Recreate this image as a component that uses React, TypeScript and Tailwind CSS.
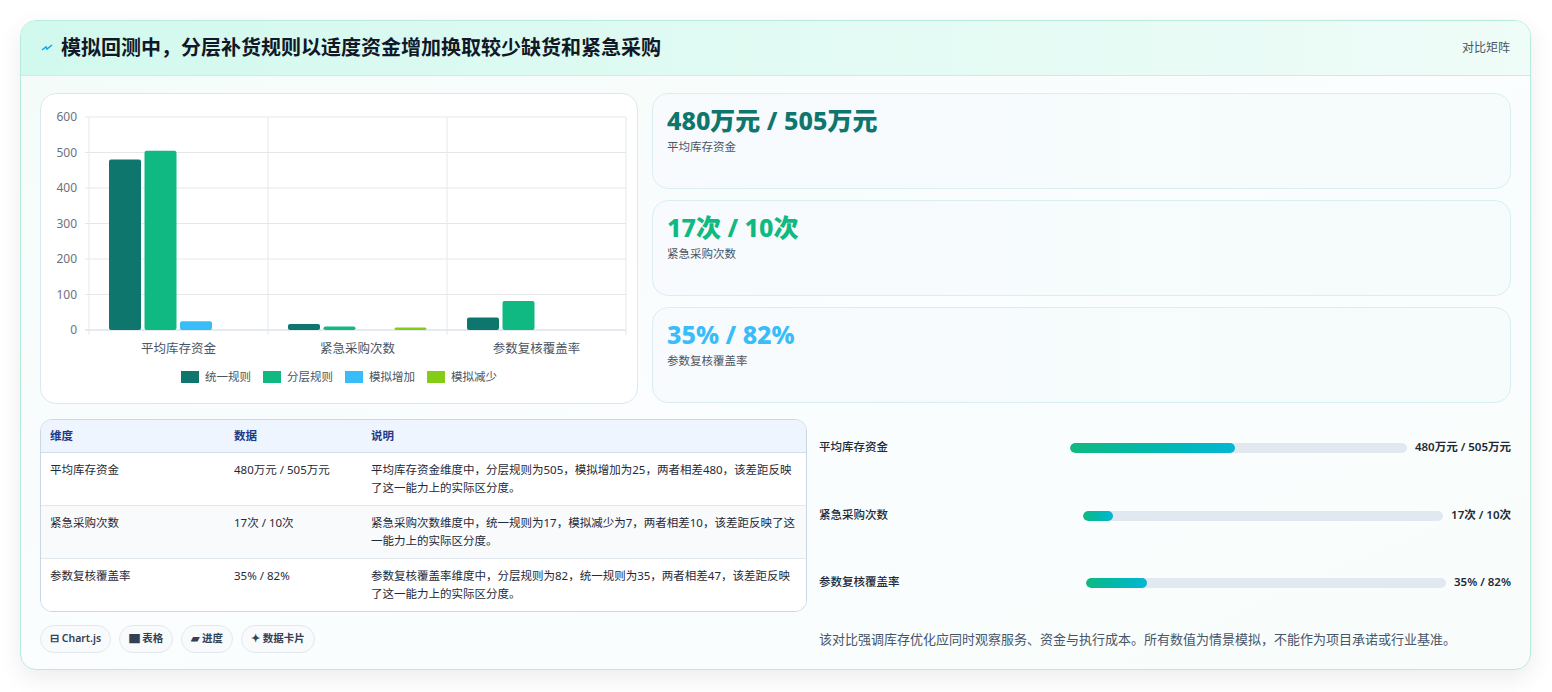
import React from "react";

const F = { fontFamily: '"Noto Sans","Noto Sans CJK SC",sans-serif' };

function Chart() {
  const x0 = 48, y0 = 236, top = 23, h = y0 - top;
  const cw = 179;
  const yv = (v: number) => y0 - (v / 600) * h;
  const data = [
    [480, 505, 25, 0],
    [17, 10, 0, 7],
    [35, 82, 0, 0],
  ];
  const colors = ["#0f766e", "#10b981", "#38bdf8", "#84cc16"];
  const cats = ["平均库存资金", "紧急采购次数", "参数复核覆盖率"];
  return (
    <svg width="597" height="310" className="block" style={F}>
      {[0, 100, 200, 300, 400, 500, 600].map((t) => (
        <g key={t}>
          <line x1={x0 - 4} x2={585} y1={yv(t)} y2={yv(t)} stroke={t === 0 ? "#cbd5e1" : "#e5e7eb"} />
          <text x={36} y={yv(t) + 4} textAnchor="end" fontSize="12" fill="#6b7280">{t}</text>
        </g>
      ))}
      {[0, 1, 2, 3].map((i) => (
        <line key={i} x1={x0 + i * cw} x2={x0 + i * cw} y1={top} y2={y0 + 5} stroke="#e5e7eb" />
      ))}
      {data.map((g, ci) =>
        g.map((v, bi) =>
          v > 0 ? (
            <rect key={ci + "-" + bi} x={x0 + ci * cw + 20 + bi * 35.5} y={yv(v)} width={32} height={y0 - yv(v)} rx={2} fill={colors[bi]} />
          ) : null
        )
      )}
      {cats.map((c, i) => (
        <text key={c} x={x0 + i * cw + cw / 2} y={259} textAnchor="middle" fontSize="12.5" fill="#4b5563">{c}</text>
      ))}
      {["统一规则", "分层规则", "模拟增加", "模拟减少"].map((l, i) => {
        const xs = [140, 222, 304, 386][i];
        return (
          <g key={l}>
            <rect x={xs} y={277} width={18} height={12} fill={colors[i]} />
            <text x={xs + 24} y={287} fontSize="11.5" fill="#4b5563">{l}</text>
          </g>
        );
      })}
    </svg>
  );
}

function Kpi({ v, l, c }: { v: string; l: string; c: string }) {
  return (
    <div className="h-[96px] rounded-2xl border border-[#d9eef0] bg-gradient-to-r from-[#f8fafe] to-[#f5fcfb] px-[14px] pt-[10px]">
      <div className={`text-[25px] font-extrabold leading-[33px] ${c}`}>{v}</div>
      <div className="text-[11.5px] text-[#4b5563] mt-[1px]">{l}</div>
    </div>
  );
}

const rows = [
  ["平均库存资金", "480万元 / 505万元", "平均库存资金维度中，分层规则为505，模拟增加为25，两者相差480，该差距反映了这一能力上的实际区分度。"],
  ["紧急采购次数", "17次 / 10次", "紧急采购次数维度中，统一规则为17，模拟减少为7，两者相差10，该差距反映了这一能力上的实际区分度。"],
  ["参数复核覆盖率", "35% / 82%", "参数复核覆盖率维度中，分层规则为82，统一规则为35，两者相差47，该差距反映了这一能力上的实际区分度。"],
];

const bars = [
  { l: "平均库存资金", v: "480万元 / 505万元", p: 49 },
  { l: "紧急采购次数", v: "17次 / 10次", p: 8.3 },
  { l: "参数复核覆盖率", v: "35% / 82%", p: 17 },
];

export default function App() {
  return (
    <div className="bg-white w-[1552px] h-[692px] pt-[20px] pl-[20px]" style={F}>
      <div className="w-[1511px] h-[650px] rounded-2xl border border-[#b7ebdf] bg-gradient-to-br from-[#f3fcf9] via-[#fbfdfe] to-[#f8fdfc] shadow-[0_8px_24px_rgba(0,0,0,0.08)] overflow-hidden">
        <div className="h-[55px] flex items-center justify-between px-[20px] border-b border-[#c9efe3] bg-gradient-to-r from-[#d2f9ee] to-[#effcf8]">
          <div className="flex items-center gap-[8px]">
            <svg width="12" height="10" viewBox="0 0 12 10"><path d="M1 7 L5 4 L6 6 L11 2" stroke="#0ea5e9" strokeWidth="1.5" fill="none" /></svg>
            <span className="text-[20px] font-bold text-[#111827]">模拟回测中，分层补货规则以适度资金增加换取较少缺货和紧急采购</span>
          </div>
          <span className="text-[12px] text-[#475569]">对比矩阵</span>
        </div>
        <div className="px-[19px] pt-[17px]">
          <div className="flex gap-[14px]">
            <div className="w-[598px] h-[311px] rounded-2xl border border-[#dde7ee] bg-white overflow-hidden">
              <Chart />
            </div>
            <div className="flex-1 flex flex-col gap-[11px]">
              <Kpi v="480万元 / 505万元" l="平均库存资金" c="text-[#0f766e]" />
              <Kpi v="17次 / 10次" l="紧急采购次数" c="text-[#10b981]" />
              <Kpi v="35% / 82%" l="参数复核覆盖率" c="text-[#38bdf8]" />
            </div>
          </div>
          <div className="flex gap-[12px] mt-[15px]">
            <div className="w-[767px]">
              <div className="rounded-xl border border-[#cdd7e3] overflow-hidden bg-white text-[11.5px] text-[#1f2937]">
                <div className="flex h-[33px] items-center bg-[#eef5fe] border-b border-[#d5dde8] font-semibold text-[#1e3a8a]">
                  <div className="w-[193px] pl-[9px]">维度</div>
                  <div className="w-[137px]">数据</div>
                  <div className="flex-1">说明</div>
                </div>
                {rows.map((r, i) => (
                  <div key={i} className={`flex py-[8px] ${i < 2 ? "border-b border-[#e2e8f0]" : ""} ${i === 1 ? "bg-[#f8fafc]" : "bg-white"}`}>
                    <div className="w-[193px] pl-[9px] leading-[18px]">{r[0]}</div>
                    <div className="w-[137px] leading-[18px]">{r[1]}</div>
                    <div className="flex-1 pr-[8px] leading-[18px]">{r[2]}</div>
                  </div>
                ))}
              </div>
              <div className="flex gap-[8px] mt-[13px]">
                {["⊟ Chart.js", "▇ 表格", "▰ 进度", "✦ 数据卡片"].map((t) => (
                  <span key={t} className="h-[28px] px-[9px] flex items-center rounded-full border border-[#e2e8f0] bg-[#f8fafc] text-[10.5px] font-semibold text-[#334155]">{t}</span>
                ))}
              </div>
            </div>
            <div className="flex-1 pt-[11px]">
              {bars.map((b, i) => (
                <div key={i} className="h-[67.5px] flex items-start gap-[8px] text-[11.5px] text-[#1f2937]">
                  <div className="flex-1 pt-[8px] font-medium">{b.l}</div>
                  <div className={`${i === 0 ? "w-[337px]" : "w-[360px]"} h-[10px] mt-[13px] rounded-full bg-[#e2e8f0] overflow-hidden`}>
                    <div className="h-full rounded-full bg-gradient-to-r from-[#10b981] to-[#06b6d4]" style={{ width: `${b.p}%` }} />
                  </div>
                  <div className="pt-[8px] whitespace-nowrap font-semibold">{b.v}</div>
                </div>
              ))}
              <div className="text-[13px] text-[#475569] mt-[-3px]">该对比强调库存优化应同时观察服务、资金与执行成本。所有数值为情景模拟，不能作为项目承诺或行业基准。</div>
            </div>
          </div>
        </div>
      </div>
    </div>
  );
}
